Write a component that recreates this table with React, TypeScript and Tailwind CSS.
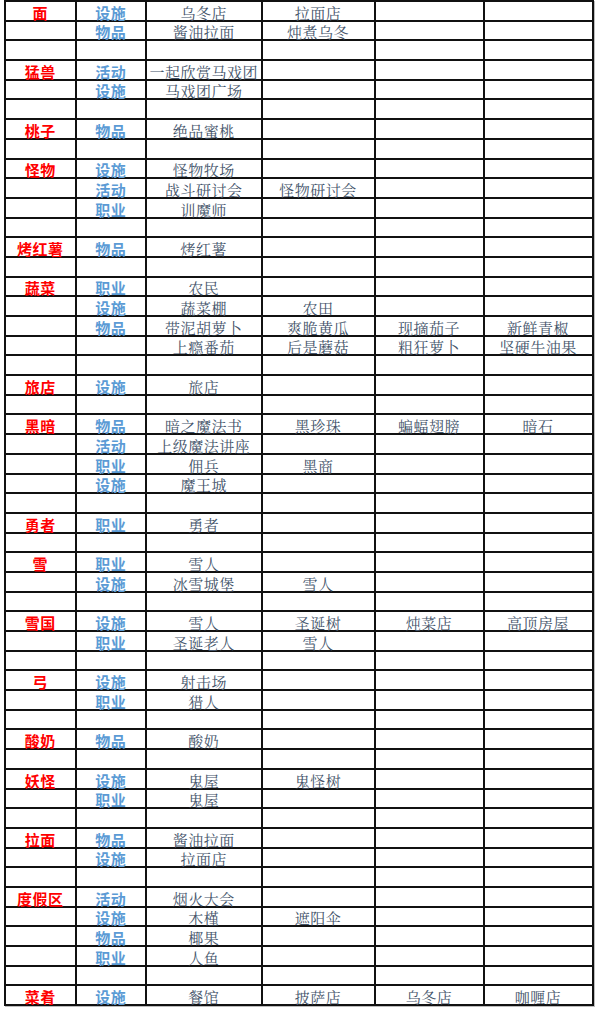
import React from "react";

type Row = string[];

const rows: Row[] = [
  ["面", "设施", "乌冬店", "拉面店", "", ""],
  ["", "物品", "酱油拉面", "炖煮乌冬", "", ""],
  ["", "", "", "", "", ""],
  ["猛兽", "活动", "一起欣赏马戏团", "", "", ""],
  ["", "设施", "马戏团广场", "", "", ""],
  ["", "", "", "", "", ""],
  ["桃子", "物品", "绝品蜜桃", "", "", ""],
  ["", "", "", "", "", ""],
  ["怪物", "设施", "怪物牧场", "", "", ""],
  ["", "活动", "战斗研讨会", "怪物研讨会", "", ""],
  ["", "职业", "训魔师", "", "", ""],
  ["", "", "", "", "", ""],
  ["烤红薯", "物品", "烤红薯", "", "", ""],
  ["", "", "", "", "", ""],
  ["蔬菜", "职业", "农民", "", "", ""],
  ["", "设施", "蔬菜棚", "农田", "", ""],
  ["", "物品", "带泥胡萝卜", "爽脆黄瓜", "现摘茄子", "新鲜青椒"],
  ["", "", "上瘾番茄", "后是蘑菇", "粗狂萝卜", "坚硬牛油果"],
  ["", "", "", "", "", ""],
  ["旅店", "设施", "旅店", "", "", ""],
  ["", "", "", "", "", ""],
  ["黑暗", "物品", "暗之魔法书", "黑珍珠", "蝙蝠翅膀", "暗石"],
  ["", "活动", "上级魔法讲座", "", "", ""],
  ["", "职业", "佣兵", "黑商", "", ""],
  ["", "设施", "魔王城", "", "", ""],
  ["", "", "", "", "", ""],
  ["勇者", "职业", "勇者", "", "", ""],
  ["", "", "", "", "", ""],
  ["雪", "职业", "雪人", "", "", ""],
  ["", "设施", "冰雪城堡", "雪人", "", ""],
  ["", "", "", "", "", ""],
  ["雪国", "设施", "雪人", "圣诞树", "炖菜店", "高顶房屋"],
  ["", "职业", "圣诞老人", "雪人", "", ""],
  ["", "", "", "", "", ""],
  ["弓", "设施", "射击场", "", "", ""],
  ["", "职业", "猎人", "", "", ""],
  ["", "", "", "", "", ""],
  ["酸奶", "物品", "酸奶", "", "", ""],
  ["", "", "", "", "", ""],
  ["妖怪", "设施", "鬼屋", "鬼怪树", "", ""],
  ["", "职业", "鬼屋", "", "", ""],
  ["", "", "", "", "", ""],
  ["拉面", "物品", "酱油拉面", "", "", ""],
  ["", "设施", "拉面店", "", "", ""],
  ["", "", "", "", "", ""],
  ["度假区", "活动", "烟火大会", "", "", ""],
  ["", "设施", "木槿", "遮阳伞", "", ""],
  ["", "物品", "椰果", "", "", ""],
  ["", "职业", "人鱼", "", "", ""],
  ["", "", "", "", "", ""],
  ["菜肴", "设施", "餐馆", "披萨店", "乌冬店", "咖喱店"],
];

const colorClass = (i: number) =>
  i === 0
    ? "text-[#ff0000] font-semibold font-['Noto_Sans_CJK_SC',sans-serif]"
    : i === 1
    ? "text-[#5b9bd5] font-semibold font-['Noto_Sans_CJK_SC',sans-serif]"
    : "text-[#44546a] font-normal font-['Noto_Serif_CJK_SC','Noto_Sans_CJK_SC',serif]";

export default function App() {
  return (
    <div className="w-[600px] h-[1010px] bg-white overflow-hidden">
      <div className="ml-[4px] w-[590px] grid grid-cols-[70.5px_70.5px_115.5px_113px_109px_109px] border-l-2 border-t-2 border-[#111] shadow-[1px_1px_0_#bdbdbd]">
        {rows.map((r, ri) =>
          r.map((c, ci) => (
            <div
              key={`${ri}-${ci}`}
              className={`h-[19.7px] border-r-2 border-b-2 border-[#111] flex items-end justify-center overflow-visible whitespace-nowrap text-[15px] leading-[15px] tracking-[0.5px] ${colorClass(ci)}`}
            >
              {c}
            </div>
          ))
        )}
      </div>
    </div>
  );
}
